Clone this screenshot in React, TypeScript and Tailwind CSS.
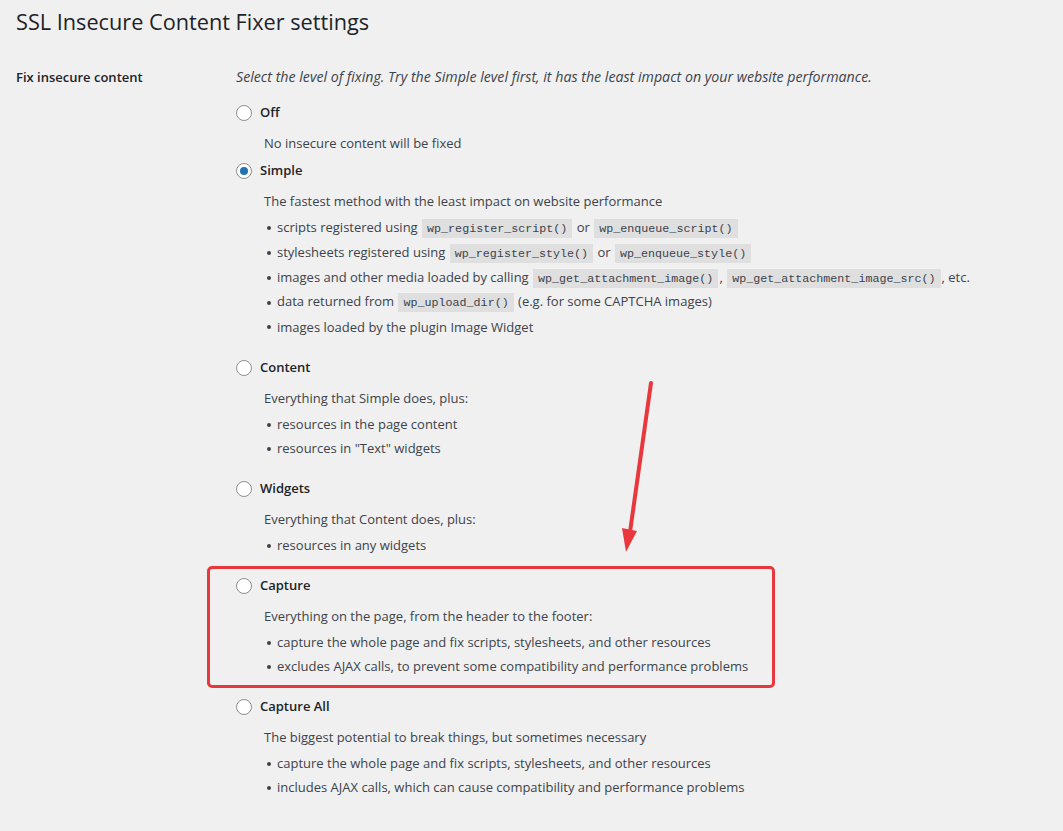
import type { ReactNode } from "react";

type Option = {
  id: string;
  label: string;
  desc: string;
  items: ReactNode[];
  checked?: boolean;
  highlight?: boolean;
};

function Code({ children }: { children: ReactNode }) {
  return (
    <code className="mx-[1px] bg-black/[0.07] px-[5px] pt-[3px] pb-[2px] font-['Liberation_Mono',monospace] text-[11.7px] text-[#3c434a]">
      {children}
    </code>
  );
}

const OPTIONS: Option[] = [
  { id: "off", label: "Off", desc: "No insecure content will be fixed", items: [] },
  {
    id: "simple",
    label: "Simple",
    checked: true,
    desc: "The fastest method with the least impact on website performance",
    items: [
      <>scripts registered using <Code>wp_register_script()</Code> or <Code>wp_enqueue_script()</Code></>,
      <>stylesheets registered using <Code>wp_register_style()</Code> or <Code>wp_enqueue_style()</Code></>,
      <>images and other media loaded by calling <Code>wp_get_attachment_image()</Code>, <Code>wp_get_attachment_image_src()</Code>, etc.</>,
      <>data returned from <Code>wp_upload_dir()</Code> (e.g. for some CAPTCHA images)</>,
      <>images loaded by the plugin Image Widget</>,
    ],
  },
  {
    id: "content",
    label: "Content",
    desc: "Everything that Simple does, plus:",
    items: ["resources in the page content", 'resources in "Text" widgets'],
  },
  {
    id: "widgets",
    label: "Widgets",
    desc: "Everything that Content does, plus:",
    items: ["resources in any widgets"],
  },
  {
    id: "capture",
    label: "Capture",
    highlight: true,
    desc: "Everything on the page, from the header to the footer:",
    items: [
      "capture the whole page and fix scripts, stylesheets, and other resources",
      "excludes AJAX calls, to prevent some compatibility and performance problems",
    ],
  },
  {
    id: "capture_all",
    label: "Capture All",
    desc: "The biggest potential to break things, but sometimes necessary",
    items: [
      "capture the whole page and fix scripts, stylesheets, and other resources",
      "includes AJAX calls, which can cause compatibility and performance problems",
    ],
  },
];

function Radio({ checked }: { checked?: boolean }) {
  return (
    <span className="flex h-4 w-4 items-center justify-center rounded-full border border-[#8c8f94] bg-white">
      {checked && <span className="h-2 w-2 rounded-full bg-[#2271b1]" />}
    </span>
  );
}

export default function App() {
  return (
    <div className="relative min-h-screen bg-[#f0f0f1] px-4 font-['Open_Sans',sans-serif] text-[13px] text-[#3c434a]">
      <h1 className="pt-[7px] text-[21.7px] leading-[30px] text-[#1d2327]">SSL Insecure Content Fixer settings</h1>

      <div className="mt-[28px] flex">
        <div className="w-[220px] shrink-0 text-[13px] font-semibold leading-6 text-[#1d2327]">Fix insecure content</div>
        <div className="flex-1">
          <p className="text-[14.2px] leading-6 italic">
            Select the level of fixing. Try the Simple level first, it has the least impact on your website performance.
          </p>
          <div className="mt-[12px] flex flex-col gap-1">
            {OPTIONS.map((opt) => (
              <div key={opt.id} className="relative">
                {opt.highlight && (
                  <div className="pointer-events-none absolute -top-[8px] -left-[29px] h-[122px] w-[568px] rounded-[5px] border-[3px] border-[#e8383d]" />
                )}
                <label className="flex h-6 items-center gap-2 font-semibold text-[#1d2327]">
                  <Radio checked={opt.checked} />
                  {opt.label}
                </label>
                <div className="ml-[28px]">
                  <p className="mt-[6px] leading-6">{opt.desc}</p>
                  {opt.items.length > 0 && (
                    <ul className="mt-[3px] mb-3">
                      {opt.items.map((it, i) => (
                        <li
                          key={i}
                          className={`flex items-center whitespace-nowrap ${opt.id === "simple" ? "h-[24.75px]" : "h-6"}`}
                        >
                          <span className="mr-[6px] ml-[3px] h-[4px] w-[4px] rounded-full bg-[#3c434a]" />
                          <span>{it}</span>
                        </li>
                      ))}
                    </ul>
                  )}
                </div>
              </div>
            ))}
          </div>
        </div>
      </div>

      <svg className="pointer-events-none absolute top-0 left-0" width="1063" height="831">
        <line x1="651" y1="383" x2="630" y2="532" stroke="#e8383d" strokeWidth="4" strokeLinecap="round" />
        <polygon points="622,528 637,531 626,552" fill="#e8383d" />
      </svg>
    </div>
  );
}
